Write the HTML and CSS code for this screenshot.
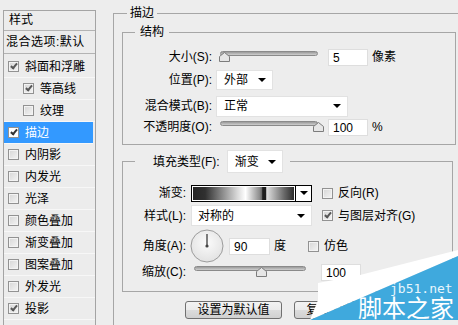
FILE: index.html
```html
<!DOCTYPE html>
<html lang="zh-CN">

<head>
    <meta charset="utf-8">
    <meta name="viewport" content="width=device-width, initial-scale=1.0">
    <title>图层样式 - 描边</title>
    <link rel="stylesheet" href="styles.css">
</head>

<body>

    <div class="dialog">

        <!-- venstre liste med effekter -->
        <div class="style-list">
            <div class="list-head">样式</div>
            <div class="list-blend">混合选项:默认</div>
            <div class="list-items">
                <div class="item"><span class="cb checked"></span>斜面和浮雕</div>
                <div class="item sub"><span class="cb checked"></span>等高线</div>
                <div class="item sub"><span class="cb"></span>纹理</div>
                <div class="item active"><span class="cb checked"></span>描边</div>
                <div class="item"><span class="cb"></span>内阴影</div>
                <div class="item"><span class="cb"></span>内发光</div>
                <div class="item"><span class="cb"></span>光泽</div>
                <div class="item"><span class="cb"></span>颜色叠加</div>
                <div class="item"><span class="cb"></span>渐变叠加</div>
                <div class="item"><span class="cb"></span>图案叠加</div>
                <div class="item"><span class="cb"></span>外发光</div>
                <div class="item"><span class="cb checked"></span>投影</div>
            </div>
        </div>

        <div class="settings">
            <fieldset class="outer">
                <legend>描边</legend>

                <fieldset class="structure">
                    <legend>结构</legend>

                    <div class="row r-size">
                        <span class="lbl">大小(S):</span>
                        <div class="slider">
                            <div class="track"></div>
                            <svg class="thumb" style="left:3px" width="11" height="10" viewBox="0 0 11 10"><polygon points="5.5,0.5 10.5,4.5 10.5,9.5 0.5,9.5 0.5,4.5"></polygon></svg>
                        </div>
                        <span class="field num">5</span>
                        <span class="unit">像素</span>
                    </div>

                    <div class="row r-pos">
                        <span class="lbl">位置(P):</span>
                        <span class="select sel-pos">外部<i class="arrow"></i></span>
                    </div>

                    <div class="row r-mode">
                        <span class="lbl">混合模式(B):</span>
                        <span class="select sel-mode">正常<i class="arrow"></i></span>
                    </div>

                    <div class="row r-opacity">
                        <span class="lbl">不透明度(O):</span>
                        <div class="slider">
                            <div class="track"></div>
                            <svg class="thumb" style="left:97px" width="11" height="10" viewBox="0 0 11 10"><polygon points="5.5,0.5 10.5,4.5 10.5,9.5 0.5,9.5 0.5,4.5"></polygon></svg>
                        </div>
                        <span class="field num">100</span>
                        <span class="unit">%</span>
                    </div>
                </fieldset>

                <fieldset class="fill">
                    <legend><span class="legend-row">填充类型(F):<span class="select sel-type">渐变<i class="arrow"></i></span></span></legend>

                    <div class="row r-grad">
                        <span class="lbl">渐变:</span>
                        <div class="grad-picker">
                            <div class="grad-fill"></div>
                            <div class="grad-btn"><i class="arrow"></i></div>
                        </div>
                        <span class="check-label cl-reverse"><span class="cb"></span>反向(R)</span>
                    </div>

                    <div class="row r-style">
                        <span class="lbl">样式(L):</span>
                        <span class="select sel-style">对称的<i class="arrow"></i></span>
                        <span class="check-label cl-align"><span class="cb checked"></span>与图层对齐(G)</span>
                    </div>

                    <div class="row r-angle">
                        <span class="lbl">角度(A):</span>
                        <svg class="dial" width="34" height="34" viewBox="0 0 34 34">
                            <defs>
                                <radialGradient id="dialbg" cx="50%" cy="40%" r="60%">
                                    <stop offset="0" stop-color="#fbfbfb"></stop>
                                    <stop offset="1" stop-color="#e2e2e2"></stop>
                                </radialGradient>
                            </defs>
                            <circle cx="17" cy="17" r="16" fill="url(#dialbg)" stroke="#9c9c9c"></circle>
                            <line x1="17" y1="17" x2="17" y2="5" stroke="#555" stroke-width="1.5"></line>
                            <circle cx="17" cy="17" r="1.6" fill="#444"></circle>
                        </svg>
                        <span class="field angle">90</span>
                        <span class="unit">度</span>
                        <span class="check-label cl-dither"><span class="cb"></span>仿色</span>
                    </div>

                    <div class="row r-scale">
                        <span class="lbl">缩放(C):</span>
                        <div class="slider wide">
                            <div class="track"></div>
                            <svg class="thumb" style="left:66px" width="11" height="10" viewBox="0 0 11 10"><polygon points="5.5,0.5 10.5,4.5 10.5,9.5 0.5,9.5 0.5,4.5"></polygon></svg>
                        </div>
                        <span class="field num">100</span>
                    </div>
                </fieldset>

                <div class="buttons">
                    <span class="btn">设置为默认值</span>
                    <span class="btn">复位为默认值</span>
                </div>
            </fieldset>
        </div>
    </div>

    <!-- vandmærke nederst til højre -->
    <div class="watermark">
        <svg width="158" height="85" viewBox="0 0 158 85">
            <polygon points="10,80 18,60 18,43 60,35 158,10 158,16" fill="#ffffff"></polygon>
            <polygon points="10,80 158,16 158,80" fill="#3fa9dd"></polygon>
        </svg>
        <span class="wm-url">jb51.net</span>
        <span class="wm-name">脚本之家</span>
    </div>

</body>

</html>
```

FILE: styles.css
```css
body {
    margin: 0;
    width: 458px;
    height: 325px;
    overflow: hidden;
    position: relative;
    background-color: #ededed;
    color: #000;
    font-family: "Liberation Sans", "Noto Sans CJK SC", sans-serif;
    font-size: 12px;
    line-height: 16px;
}

.dialog {
    display: flex;
    align-items: flex-start;
    height: 325px;
    overflow: hidden;
}

/* effektlisten */
.style-list {
    flex: none;
    width: 91px;
    height: 330px;
    margin: 10px 0 0 3px;
    border: 1px solid #a4a4a4;
    background-color: #ececec;
}

.list-head {
    height: 19px;
    line-height: 19px;
    padding-left: 5px;
    border-bottom: 1px solid #b3b3b3;
}

.list-blend {
    height: 22px;
    line-height: 22px;
    padding-left: 2px;
    white-space: nowrap;
    letter-spacing: 0.5px;
    border-bottom: 1px solid #b3b3b3;
}

.list-items {
    margin-top: 2px;
}

.item {
    display: flex;
    align-items: center;
    height: 21px;
    padding-left: 4px;
    white-space: nowrap;
    border-bottom: 1px solid #f7f7f7;
}

.item.sub {
    padding-left: 19px;
}

.item.active {
    background-color: #3399ff;
    color: #fff;
    margin-right: 2px;
}

.item .cb {
    margin-right: 6px;
}

/* afkrydsningsfelter */
.cb {
    position: relative;
    display: inline-block;
    flex: none;
    width: 9px;
    height: 9px;
    border: 1px solid #929292;
    background: linear-gradient(135deg, #d6d6d6, #f4f4f4);
    box-shadow: inset 0 0 0 1px #f3f3f3;
}

.cb.checked::after {
    content: "";
    position: absolute;
    left: 3px;
    top: 0px;
    width: 2px;
    height: 5px;
    border-right: 2px solid #575757;
    border-bottom: 2px solid #575757;
    transform: rotate(40deg);
}

.item.active .cb {
    background: #fff;
    box-shadow: none;
}

.item.active .cb.checked::after {
    border-color: #333;
}

/* højre side */
.settings {
    flex: none;
    margin-left: 17px;
}

fieldset {
    margin: 0;
    padding: 0;
    border: 1px solid #a6a6a6;
    min-width: 0;
}

legend {
    padding: 0 3px;
    line-height: 16px;
}

.outer {
    margin-top: 5px;
    width: 360px;
    height: 340px;
    padding-left: 8px;
    border-right: none;
}

.outer > legend {
    margin-left: 5px;
}

.structure {
    margin-top: 3px;
    width: 332px;
    padding-top: 6px;
    padding-bottom: 7px;
}

.structure > legend {
    margin-left: 12px;
    padding: 0 5px;
}

.fill {
    margin-top: 5px;
    width: 329px;
    padding-bottom: 10px;
}

.fill > legend {
    margin-left: 12px;
    padding: 0 7px 0 18px;
}

.legend-row {
    display: inline-flex;
    align-items: center;
    height: 23px;
}

.row {
    display: flex;
    align-items: center;
    white-space: nowrap;
}

.structure .lbl {
    width: 89px;
    margin-right: 4px;
    text-align: right;
    flex: none;
}

.fill .lbl {
    width: 63px;
    margin-right: 5px;
    text-align: right;
    flex: none;
}

.r-size {
    height: 22px;
}

.r-pos {
    height: 22px;
    margin-top: 1px;
}

.r-mode {
    height: 22px;
    margin-top: 4px;
}

.r-opacity {
    height: 20px;
}

.r-grad {
    height: 20px;
    margin-top: 10px;
}

.r-style {
    height: 21px;
    margin-top: 2px;
}

.r-angle {
    height: 34px;
    margin-top: 3px;
}

.r-scale {
    height: 18px;
}

/* skyder */
.slider {
    position: relative;
    width: 106px;
    height: 12px;
    flex: none;
}

.slider.wide {
    width: 120px;
    margin-left: -1px;
}

.track {
    margin: 0 4px;
    height: 3px;
    border: 1px solid #8a8a8a;
    border-radius: 3px;
    background: linear-gradient(#9a9a9a, #cfcfcf);
}

.thumb {
    position: absolute;
    top: 1px;
}

.thumb polygon {
    fill: #e6e6e6;
    stroke: #7c7c7c;
}

/* felter og lister */
.field {
    box-sizing: border-box;
    flex: none;
    height: 17px;
    padding-left: 4px;
    line-height: 16px;
    background-color: #fff;
    border: 1px solid #dedede;
}

.field.num {
    width: 40px;
    margin-left: 6px;
}

.r-scale .field.num {
    margin-left: 11px;
}

.field.angle {
    width: 41px;
    margin-left: 5px;
}

.unit {
    margin-left: 4px;
}

.select {
    box-sizing: border-box;
    display: inline-flex;
    flex: none;
    align-items: center;
    justify-content: space-between;
    height: 21px;
    padding: 0 6px 0 7px;
    background-color: #fff;
    border: 1px solid #e2e2e2;
}

.sel-pos {
    width: 57px;
    height: 20px;
}

.sel-mode {
    width: 132px;
}

.sel-type {
    width: 56px;
    height: 23px;
    margin-left: 7px;
}

.sel-style {
    width: 121px;
    padding-left: 6px;
}

.arrow {
    display: inline-block;
    width: 0;
    height: 0;
    border-left: 4px solid transparent;
    border-right: 4px solid transparent;
    border-top: 4px solid #000;
}

/* gradientvælger */
.grad-picker {
    box-sizing: border-box;
    display: flex;
    flex: none;
    width: 121px;
    height: 17px;
    border: 1px solid #000;
    background-color: #fff;
}

.grad-fill {
    flex: 1;
    margin: 1px;
    background: linear-gradient(to right, #262626 0%, #303030 12%, #858585 28%, #d9d9d9 44%, #ffffff 52%, #8c8c8c 66%, #6a6a6a 68%, #1e1e1e 69%, #1e1e1e 72%, #e0e0e0 73%, #b0b0b0 80%, #6a6a6a 90%, #2c2c2c 100%);
}

.grad-btn {
    display: flex;
    align-items: center;
    justify-content: center;
    width: 15px;
    border-left: 1px solid #000;
}

.check-label {
    display: inline-flex;
    align-items: center;
}

.check-label .cb {
    margin-right: 5px;
}

.cl-reverse {
    margin-left: 10px;
}

.cl-align {
    margin-left: 10px;
}

.cl-dither {
    margin-left: 22px;
}

.dial {
    flex: none;
    margin-left: -1px;
}

/* knapper */
.buttons {
    display: flex;
    gap: 12px;
    margin-top: 9px;
    padding-left: 63px;
}

.btn {
    box-sizing: border-box;
    flex: none;
    width: 97px;
    height: 18px;
    line-height: 16px;
    text-align: center;
    white-space: nowrap;
    border: 1px solid #707070;
    border-radius: 3px;
    background: linear-gradient(#f3f3f3, #ebebeb 50%, #dcdcdc 51%, #d0d0d0);
}

/* vandmærke */
.watermark {
    position: absolute;
    left: 300px;
    top: 240px;
    width: 158px;
    height: 85px;
}

.watermark svg {
    display: block;
}

.wm-url {
    position: absolute;
    left: 90px;
    top: 42px;
    color: #e8f5fc;
    font-family: "DejaVu Sans Mono", monospace;
    font-size: 13px;
    line-height: 13px;
}

.wm-name {
    position: absolute;
    left: 58px;
    top: 56px;
    color: #fff;
    font-family: "Noto Sans CJK SC", sans-serif;
    font-size: 24px;
    line-height: 22px;
}
```
